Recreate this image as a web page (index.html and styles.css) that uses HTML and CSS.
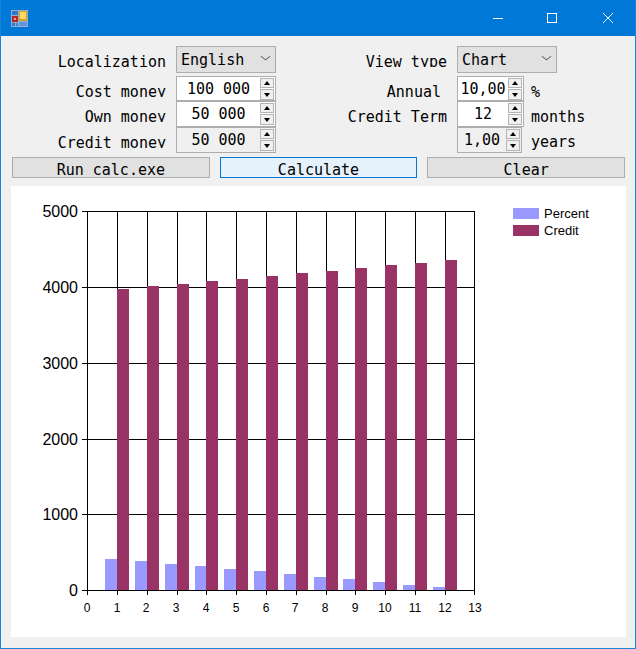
FILE: index.html
```html
<!DOCTYPE html>
<html lang="en">
<head>
    <meta charset="UTF-8">
    <title>Credit calculator</title>
    <link rel="stylesheet" href="styles.css">
</head>
<body>
<div class="window">
    <div class="titlebar">
        <svg class="app_icon" width="17" height="17" viewBox="0 0 17 17">
            <rect width="17" height="17" fill="#8fb0cf"/>
            <rect x="1" y="1" width="6" height="4" fill="#2f78c8"/>
            <rect x="1" y="6" width="6" height="6" fill="#b8262a"/>
            <rect x="3" y="8" width="2" height="2" fill="#e8a0a0"/>
            <rect x="1" y="13" width="3" height="3" fill="#2f78c8"/>
            <rect x="5" y="13" width="2" height="3" fill="#3f86d0"/>
            <rect x="8" y="1" width="8" height="10" fill="#d8a020"/>
            <rect x="9" y="2" width="6" height="7" fill="#ffd860"/>
            <rect x="8" y="12" width="8" height="4" fill="#5f94e8"/>
        </svg>
        <div class="caption_btns">
            <svg width="10" height="10" viewBox="0 0 10 10"><path d="M0 5.5h10" stroke="#fff" fill="none"/></svg>
            <svg class="cap_max" width="10" height="10" viewBox="0 0 10 10"><rect x="0.5" y="0.5" width="9" height="9" stroke="#fff" fill="none"/></svg>
            <svg width="10" height="10" viewBox="0 0 10 10"><path d="M0 0l10 10M10 0L0 10" stroke="#fff" fill="none"/></svg>
        </div>
    </div>

    <div class="form">
        <div class="row row_select">
            <div class="label">Localization</div>
            <div class="combo"><span>English</span><i class="chevron"></i></div>
            <div class="label label_r">View type</div>
            <div class="combo"><span>Chart</span><i class="chevron"></i></div>
        </div>
        <div class="row row_a">
            <div class="label">Cost money</div>
            <div class="spin"><span>100 000</span><div class="spin_btns"><b class="up"></b><b class="down"></b></div></div>
            <div class="label label_r label_in">Annual</div>
            <div class="spin spin_s"><span>10,00</span><div class="spin_btns"><b class="up"></b><b class="down"></b></div></div>
            <div class="suffix">%</div>
        </div>
        <div class="row row_b">
            <div class="label">Own money</div>
            <div class="spin"><span>50 000</span><div class="spin_btns"><b class="up"></b><b class="down"></b></div></div>
            <div class="label label_r">Credit Term</div>
            <div class="spin spin_s"><span>12</span><div class="spin_btns"><b class="up"></b><b class="down"></b></div></div>
            <div class="suffix">months</div>
        </div>
        <div class="row row_b">
            <div class="label">Credit money</div>
            <div class="spin spin_off"><span>50 000</span><div class="spin_btns"><b class="up"></b><b class="down"></b></div></div>
            <div class="label label_r"></div>
            <div class="spin spin_s spin_xs spin_off"><span>1,00</span><div class="spin_btns"><b class="up"></b><b class="down"></b></div></div>
            <div class="suffix suffix_xs">years</div>
        </div>
        <div class="actions">
            <button class="btn">Run calc.exe</button>
            <button class="btn btn_on">Calculate</button>
            <button class="btn">Clear</button>
        </div>
    </div>

    <div class="chart">
        <svg width="615" height="451" viewBox="11 186 615 451">
            <g class="bars_p">
                <rect x="105" y="559" width="12" height="31"/>
                <rect x="135" y="561" width="12" height="29"/>
                <rect x="165" y="564" width="12" height="26"/>
                <rect x="195" y="566" width="11" height="24"/>
                <rect x="224" y="569" width="12" height="21"/>
                <rect x="254" y="571" width="12" height="19"/>
                <rect x="284" y="574" width="12" height="16"/>
                <rect x="314" y="577" width="12" height="13"/>
                <rect x="343" y="579" width="12" height="11"/>
                <rect x="373" y="582" width="12" height="8"/>
                <rect x="403" y="585" width="12" height="5"/>
                <rect x="433" y="587" width="12" height="3"/>
            </g>
            <path class="grid" d="M82 211.5H475M82 287.5H475M82 363.5H475M82 439.5H475M82 514.5H475M82 590.5H475
                M87.5 211V595M117.5 211V595M147.5 211V595M177.5 211V595M206.5 211V595M236.5 211V595M266.5 211V595
                M296.5 211V595M326.5 211V595M355.5 211V595M385.5 211V595M415.5 211V595M445.5 211V595M474.5 211V595"/>
            <g class="bars_c">
                <rect x="117" y="289" width="12" height="301"/>
                <rect x="147" y="286" width="12" height="304"/>
                <rect x="177" y="284" width="12" height="306"/>
                <rect x="206" y="281" width="12" height="309"/>
                <rect x="236" y="279" width="12" height="311"/>
                <rect x="266" y="276" width="12" height="314"/>
                <rect x="296" y="273" width="12" height="317"/>
                <rect x="326" y="271" width="12" height="319"/>
                <rect x="355" y="268" width="12" height="322"/>
                <rect x="385" y="265" width="12" height="325"/>
                <rect x="415" y="263" width="12" height="327"/>
                <rect x="445" y="260" width="12" height="330"/>
            </g>
            <path class="base" d="M82 590.5H475"/>
            <g class="y_labels">
                <text x="78" y="217">5000</text>
                <text x="78" y="293">4000</text>
                <text x="78" y="369">3000</text>
                <text x="78" y="445">2000</text>
                <text x="78" y="520">1000</text>
                <text x="78" y="596">0</text>
            </g>
            <g class="x_labels">
                <text x="87" y="612">0</text>
                <text x="117" y="612">1</text>
                <text x="146" y="612">2</text>
                <text x="176" y="612">3</text>
                <text x="206" y="612">4</text>
                <text x="236" y="612">5</text>
                <text x="266" y="612">6</text>
                <text x="295" y="612">7</text>
                <text x="325" y="612">8</text>
                <text x="355" y="612">9</text>
                <text x="385" y="612">10</text>
                <text x="415" y="612">11</text>
                <text x="445" y="612">12</text>
                <text x="475" y="612">13</text>
            </g>
            <rect x="513" y="208" width="26" height="11" fill="#9999ff"/>
            <rect x="513" y="225" width="26" height="11" fill="#993366"/>
            <text class="legend" x="544" y="218">Percent</text>
            <text class="legend" x="544" y="235">Credit</text>
        </svg>
    </div>
</div>
</body>
</html>
```

FILE: styles.css
```css
*{margin: 0;padding: 0;box-sizing: border-box;}
body{
    width: 636px;
    height: 649px;
    overflow: hidden;
    font-family: "DejaVu Sans Mono", "Liberation Mono", monospace;
    font-size: 15px;
    color: #000;
}
.window{
    width: 636px;
    height: 649px;
    background-color: #f0f0f0;
    border: 1px solid #1883d7;
    border-top-color: #0078d7;
    display: flex;
    flex-direction: column;
}
/* title bar */
.titlebar{
    height: 35px;
    background-color: #0078d7;
    display: flex;
    align-items: center;
    justify-content: space-between;
    padding: 0 22px 0 10px;
}
.app_icon{display: block;}
.caption_btns{
    display: flex;
    gap: 45px;
    margin-bottom: 1px;
}
.caption_btns svg{display: block;}
.caption_btns .cap_max{margin: 0 1px 0 -1px;}
/* form */
.form{
    padding: 10px 10px 0 11px;
}
.row{
    display: flex;
}
.row_select{height: 27px;margin-bottom: 3px;}
.row_a{height: 25px;}
.row_b{height: 26px;}
.label{
    width: 164px;
    height: 21px;
    padding-top: 7px;
    padding-right: 10px;
    line-height: 18px;
    text-align: right;
    white-space: nowrap;
    overflow: hidden;
}
.label_r{
    width: 181px;
}
.label_in{
    padding-right: 16px;
}
.combo{
    width: 100px;
    height: 27px;
    border: 1px solid #adadad;
    background-color: #e1e1e1;
    line-height: 25px;
    padding: 1px 0 0 4px;
    display: flex;
    justify-content: space-between;
}
.chevron{
    width: 7px;
    height: 7px;
    margin: 5px 6px 0 0;
    border-right: 1px solid #555;
    border-bottom: 1px solid #555;
    transform: scaleY(0.75) rotate(45deg);
}
.spin{
    width: 100px;
    border: 1px solid #adadad;
    background-color: #fff;
    display: flex;
    line-height: 23px;
}
.spin span{
    flex: 1;
    text-align: center;
    white-space: nowrap;
    padding-top: 1px;
}
.spin_s{width: 67px;}
.spin_xs{width: 65px;}
.spin_off{background-color: #f0f0f0;}
.spin_btns{
    width: 14px;
    margin: 1px 1px 0 0;
    display: flex;
    flex-direction: column;
    gap: 1px;
}
.spin_btns b{
    display: flex;
    align-items: center;
    justify-content: center;
    border: 1px solid #b4b4b4;
    background-color: #f0f0f0;
    height: 10px;
}
.spin_btns b + b{height: 11px;}
.up::after{
    content: "";
    border-left: 3.5px solid transparent;
    border-right: 3.5px solid transparent;
    border-bottom: 4px solid #000;
}
.down::after{
    content: "";
    border-left: 3.5px solid transparent;
    border-right: 3.5px solid transparent;
    border-top: 4px solid #000;
}
.suffix{
    padding: 7px 0 0 7px;
    line-height: 18px;
    white-space: nowrap;
}
.suffix_xs{padding: 6px 0 0 9px;}
/* buttons */
.actions{
    display: flex;
    gap: 10px;
    margin-top: 4px;
    margin-bottom: 8px;
}
.btn{
    width: 198px;
    height: 21px;
    border: 1px solid #adadad;
    background-color: #e1e1e1;
    font-family: inherit;
    font-size: 15px;
    line-height: 13px;
    padding: 6px 0 0;
    overflow: hidden;
    color: #000;
}
.btn_on{
    border-color: #0078d7;
    background-color: #e5f1fb;
}
/* chart */
.chart{
    width: 615px;
    height: 451px;
    margin-left: 10px;
    background-color: #fff;
}
.chart svg{display: block;}
.chart text{font-family: "Liberation Sans", Arial, sans-serif;fill: #000;}
.bars_p rect{fill: #9999ff;}
.bars_c rect{fill: #993366;}
.grid, .base{stroke: #000;fill: none;stroke-width: 1;}
.y_labels text{font-size: 16px;text-anchor: end;}
.x_labels text{font-size: 12px;text-anchor: middle;}
.legend{font-size: 13px;}
```
